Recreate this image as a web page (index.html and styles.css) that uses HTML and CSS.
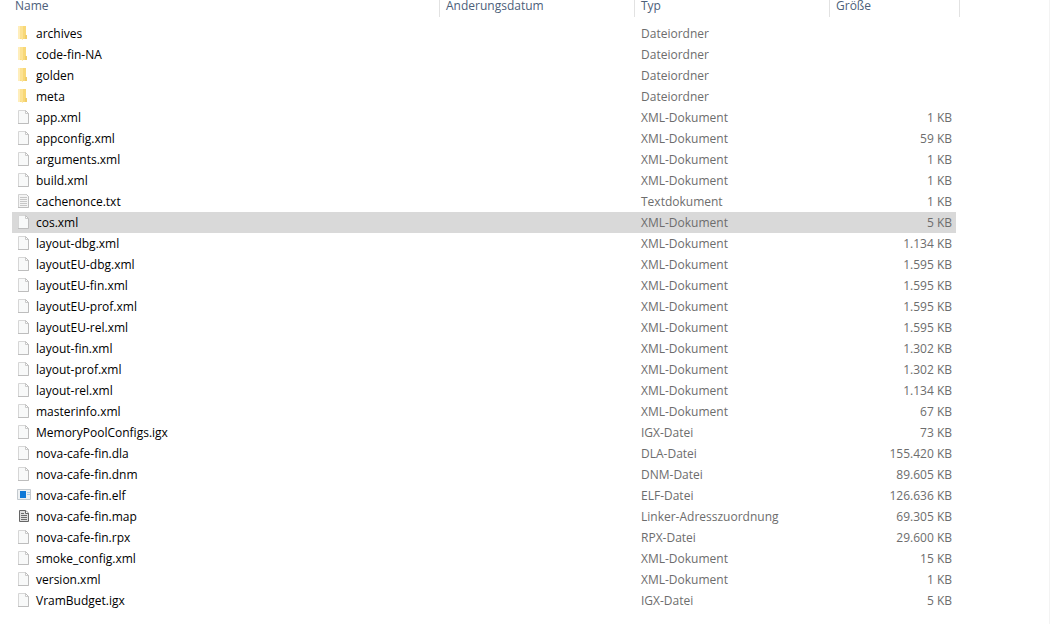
FILE: index.html
```
<!DOCTYPE html>
<html lang="de">
<head>
<meta charset="utf-8">
<title>Dateien</title>
<link rel="stylesheet" href="styles.css">
</head>
<body>
<svg class="sprite" aria-hidden="true">
  <symbol id="folder" viewBox="0 0 14 14">
    <path d="M1 0h6v13H1z" fill="#ffeebb"/>
    <path d="M3 0h6v9l1 1v3H3z" fill="#f8d878"/>
    <path d="M3 0h3v14l-3-2z" fill="#fce293"/>
    <path d="M8 9h2v4H8z" fill="#f0cd6a"/>
  </symbol>
  <symbol id="file" viewBox="0 0 14 14">
    <path d="M1.500.5h7l3 3v10h-10z" fill="#f8f9f9" stroke="#d6d6d6"/>
    <path d="M8.500.5v3h3" fill="#fff" stroke="#cacaca"/>
    <path d="M8.500.5l3 3v10H1" fill="none" stroke="#bdbdbd"/>
  </symbol>
  <symbol id="text" viewBox="0 0 14 14">
    <path d="M1.500.5h8l2 2v11h-10z" fill="#f4f4f4" stroke="#d0d0d0"/>
    <path d="M3 3.500h7M3 5.500h7M3 7.500h7M3 9.500h7M3 11.500h7" stroke="#c6c6c6"/>
    <path d="M9.500.5l2 2v11H1" fill="none" stroke="#bdbdbd"/>
  </symbol>
  <symbol id="app" viewBox="0 0 14 14">
    <path d="M.5 1.500h13v10H.5z" fill="#eef1f3" stroke="#c3c9ce"/>
    <path d="M3 3h6v7H3z" fill="#0f78d7"/>
    <path d="M10 4.500h3M10 6.500h3" stroke="#a9cbe8"/>
  </symbol>
  <symbol id="map" viewBox="0 0 14 14">
    <path d="M2.500 1.500h6L11.500 4v8.500h-9z" fill="#dedede" stroke="#666"/>
    <path d="M8.500 1.500v3h3" fill="#fff" stroke="#666"/>
    <path d="M4 4.500h3M4 6.500h6M4 8.500h6M4 10.500h6" stroke="#6b6b6b"/>
  </symbol>
</svg>
<main class="pane">
<table class="files">
  <colgroup><col><col class="col-date"><col class="col-type"><col class="col-size"></colgroup>
  <thead>
    <tr>
      <th scope="col"><button class="sort first" type="button">Name</button></th>
      <th scope="col"><button class="sort" type="button">Änderungsdatum</button></th>
      <th scope="col"><button class="sort" type="button">Typ</button></th>
      <th scope="col"><button class="sort" type="button">Größe</button></th>
    </tr>
  </thead>
  <tbody>
    <tr><td class="name"><svg class="icon"><use href="#folder"/></svg>archives</td><td></td><td>Dateiordner</td><td class="size"></td></tr>
    <tr><td class="name"><svg class="icon"><use href="#folder"/></svg>code-fin-NA</td><td></td><td>Dateiordner</td><td class="size"></td></tr>
    <tr><td class="name"><svg class="icon"><use href="#folder"/></svg>golden</td><td></td><td>Dateiordner</td><td class="size"></td></tr>
    <tr><td class="name"><svg class="icon"><use href="#folder"/></svg>meta</td><td></td><td>Dateiordner</td><td class="size"></td></tr>
    <tr><td class="name"><svg class="icon"><use href="#file"/></svg>app.xml</td><td></td><td>XML-Dokument</td><td class="size">1 KB</td></tr>
    <tr><td class="name"><svg class="icon"><use href="#file"/></svg>appconfig.xml</td><td></td><td>XML-Dokument</td><td class="size">59 KB</td></tr>
    <tr><td class="name"><svg class="icon"><use href="#file"/></svg>arguments.xml</td><td></td><td>XML-Dokument</td><td class="size">1 KB</td></tr>
    <tr><td class="name"><svg class="icon"><use href="#file"/></svg>build.xml</td><td></td><td>XML-Dokument</td><td class="size">1 KB</td></tr>
    <tr><td class="name"><svg class="icon"><use href="#text"/></svg>cachenonce.txt</td><td></td><td>Textdokument</td><td class="size">1 KB</td></tr>
    <tr class="selected"><td class="name"><svg class="icon"><use href="#file"/></svg>cos.xml</td><td></td><td>XML-Dokument</td><td class="size">5 KB</td></tr>
    <tr><td class="name"><svg class="icon"><use href="#file"/></svg>layout-dbg.xml</td><td></td><td>XML-Dokument</td><td class="size">1.134 KB</td></tr>
    <tr><td class="name"><svg class="icon"><use href="#file"/></svg>layoutEU-dbg.xml</td><td></td><td>XML-Dokument</td><td class="size">1.595 KB</td></tr>
    <tr><td class="name"><svg class="icon"><use href="#file"/></svg>layoutEU-fin.xml</td><td></td><td>XML-Dokument</td><td class="size">1.595 KB</td></tr>
    <tr><td class="name"><svg class="icon"><use href="#file"/></svg>layoutEU-prof.xml</td><td></td><td>XML-Dokument</td><td class="size">1.595 KB</td></tr>
    <tr><td class="name"><svg class="icon"><use href="#file"/></svg>layoutEU-rel.xml</td><td></td><td>XML-Dokument</td><td class="size">1.595 KB</td></tr>
    <tr><td class="name"><svg class="icon"><use href="#file"/></svg>layout-fin.xml</td><td></td><td>XML-Dokument</td><td class="size">1.302 KB</td></tr>
    <tr><td class="name"><svg class="icon"><use href="#file"/></svg>layout-prof.xml</td><td></td><td>XML-Dokument</td><td class="size">1.302 KB</td></tr>
    <tr><td class="name"><svg class="icon"><use href="#file"/></svg>layout-rel.xml</td><td></td><td>XML-Dokument</td><td class="size">1.134 KB</td></tr>
    <tr><td class="name"><svg class="icon"><use href="#file"/></svg>masterinfo.xml</td><td></td><td>XML-Dokument</td><td class="size">67 KB</td></tr>
    <tr><td class="name"><svg class="icon"><use href="#file"/></svg>MemoryPoolConfigs.igx</td><td></td><td>IGX-Datei</td><td class="size">73 KB</td></tr>
    <tr><td class="name"><svg class="icon"><use href="#file"/></svg>nova-cafe-fin.dla</td><td></td><td>DLA-Datei</td><td class="size">155.420 KB</td></tr>
    <tr><td class="name"><svg class="icon"><use href="#file"/></svg>nova-cafe-fin.dnm</td><td></td><td>DNM-Datei</td><td class="size">89.605 KB</td></tr>
    <tr><td class="name"><svg class="icon"><use href="#app"/></svg>nova-cafe-fin.elf</td><td></td><td>ELF-Datei</td><td class="size">126.636 KB</td></tr>
    <tr><td class="name"><svg class="icon"><use href="#map"/></svg>nova-cafe-fin.map</td><td></td><td>Linker-Adresszuordnung</td><td class="size">69.305 KB</td></tr>
    <tr><td class="name"><svg class="icon"><use href="#file"/></svg>nova-cafe-fin.rpx</td><td></td><td>RPX-Datei</td><td class="size">29.600 KB</td></tr>
    <tr><td class="name"><svg class="icon"><use href="#file"/></svg>smoke_config.xml</td><td></td><td>XML-Dokument</td><td class="size">15 KB</td></tr>
    <tr><td class="name"><svg class="icon"><use href="#file"/></svg>version.xml</td><td></td><td>XML-Dokument</td><td class="size">1 KB</td></tr>
    <tr><td class="name"><svg class="icon"><use href="#file"/></svg>VramBudget.igx</td><td></td><td>IGX-Datei</td><td class="size">5 KB</td></tr>
  </tbody>
</table>
</main>
</body>
</html>
```

FILE: styles.css
```
* {
  box-sizing: border-box;
}

html {
  overflow: hidden;
}

body {
  margin: 0;
  background: #fff;
  color: #6d6d6d;
  font: 12px/20px "Segoe UI", "Open Sans", "Noto Sans", sans-serif;
}

.sprite {
  display: none;
}

/* The header is scrolled partly out of view above the window. */
.pane {
  display: flow-root;
  min-height: 100vh;
  margin-right: 7px;
  padding: 0 89px 0 12px;
  border-right: 1px solid #f3f3f3;
}

.files {
  width: 100%;
  margin-top: -6px;
  border-spacing: 0;
  table-layout: fixed;
}

.col-date,
.col-type {
  width: 195px;
}

.col-size {
  width: 130px;
}

th {
  padding: 0 0 6px;
  font-weight: normal;
}

.sort {
  display: block;
  width: 100%;
  height: 23px;
  padding: 0 6px;
  border: 0;
  border-right: 1px solid #e2e2e2;
  background: none;
  color: #4c607a;
  font: inherit;
  text-align: left;
}

.sort.first {
  padding-left: 3px;
}

td {
  height: 21px;
  padding: 0 6px;
  white-space: nowrap;
}

.name {
  padding-left: 5px;
  color: #000;
}

.size {
  padding-right: 4px;
  border-right: 4px solid transparent;
  background-clip: padding-box;
  text-align: right;
}

.selected td {
  background-color: #d9d9d9;
}

.icon {
  width: 14px;
  height: 14px;
  margin-right: 5px;
  vertical-align: -2px;
}
```
